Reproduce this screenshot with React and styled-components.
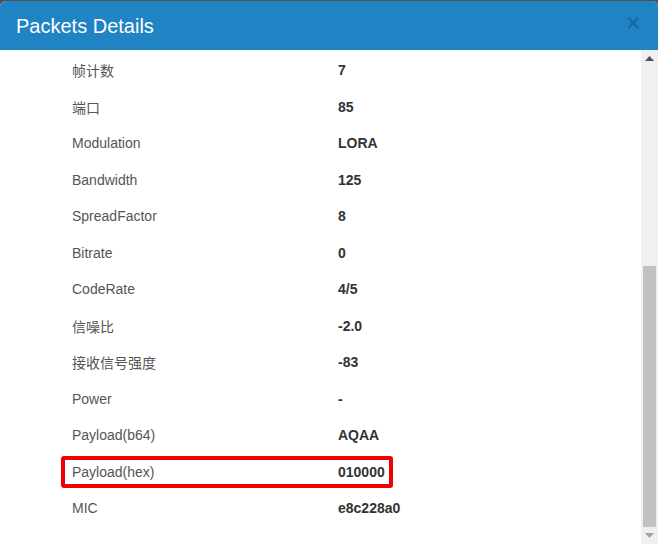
import React from "react";
import styled, { createGlobalStyle } from "styled-components";

const Global = createGlobalStyle`
  html, body { margin: 0; padding: 0; }
  body {
    background: #505050;
    font-family: "Liberation Sans", Arial, "Noto Sans CJK SC", sans-serif;
    overflow: hidden;
  }
`;

const Page = styled.div`
  height: 100vh;
  padding-top: 1px;
  box-sizing: border-box;
  display: flex;
  flex-direction: column;
`;

const Modal = styled.div`
  flex: 1;
  display: flex;
  flex-direction: column;
  background: #fff;
  border-radius: 6px 6px 0 0;
  overflow: hidden;
  min-height: 0;
`;

const Header = styled.div`
  height: 49px;
  flex: none;
  background: #2083c3;
  display: flex;
  align-items: center;
  justify-content: space-between;
  padding: 0 16px;
`;

const Title = styled.h4`
  margin: 0;
  color: #fff;
  font-size: 20px;
  font-weight: 400;
  line-height: 1;
  padding-top: 1px;
`;

const Close = styled.span`
  color: #000;
  opacity: 0.18;
  font-size: 23px;
  font-weight: 700;
  line-height: 1;
  margin-top: -4px;
  margin-right: 2px;
`;

const Body = styled.div`
  flex: 1;
  display: flex;
  min-height: 0;
`;

const Content = styled.div`
  flex: 1;
  padding-top: 2px;
  display: flex;
  flex-direction: column;
`;

const Row = styled.div`
  position: relative;
  display: grid;
  grid-template-columns: 266px auto;
  align-items: center;
  width: fit-content;
  height: 36.5px;
  margin-left: 62px;
  padding: 0 8px 0 10px;
  font-size: 14px;

  ${(p) =>
    p.$highlight &&
    `
    &::after {
      content: "";
      position: absolute;
      left: -1px;
      right: 0;
      top: 2px;
      bottom: 2.5px;
      border: 4px solid #f00000;
      border-radius: 3px;
    }
  `}
`;

const Label = styled.span`
  color: #555;
  font-family: "Liberation Sans", Arial, "Noto Sans CJK SC", sans-serif;
`;

const Value = styled.span`
  color: #333;
  font-weight: 700;
`;

const Scrollbar = styled.div`
  width: 17px;
  flex: none;
  background: #f0f0f0;
  display: flex;
  flex-direction: column;
`;

const ArrowBtn = styled.div`
  height: 17px;
  flex: none;
  display: flex;
  align-items: center;
  justify-content: center;
`;

const Track = styled.div`
  flex: 1;
  display: flex;
  flex-direction: column;
  justify-content: flex-end;
  padding: 0 2px;
`;

const Thumb = styled.div`
  height: 261px;
  background: #c1c1c1;
`;

const Tri = ({ up, color }) => (
  <svg width="9" height="5" viewBox="0 0 9 5">
    <polygon
      points={up ? "0,5 9,5 4.5,0" : "0,0 9,0 4.5,5"}
      fill={color}
    />
  </svg>
);

const rows = [
  ["帧计数", "7"],
  ["端口", "85"],
  ["Modulation", "LORA"],
  ["Bandwidth", "125"],
  ["SpreadFactor", "8"],
  ["Bitrate", "0"],
  ["CodeRate", "4/5"],
  ["信噪比", "-2.0"],
  ["接收信号强度", "-83"],
  ["Power", "-"],
  ["Payload(b64)", "AQAA"],
  ["Payload(hex)", "010000", true],
  ["MIC", "e8c228a0"],
];

export default function App() {
  return (
    <>
      <Global />
      <Page>
        <Modal>
          <Header>
            <Title>Packets Details</Title>
            <Close>×</Close>
          </Header>
          <Body>
            <Content>
              {rows.map(([l, v, h]) => (
                <Row key={l} $highlight={h}>
                  <Label>{l}</Label>
                  <Value>{v}</Value>
                </Row>
              ))}
            </Content>
            <Scrollbar>
              <ArrowBtn>
                <Tri up color="#505050" />
              </ArrowBtn>
              <Track>
                <Thumb />
              </Track>
              <ArrowBtn>
                <Tri color="#a3a3a3" />
              </ArrowBtn>
            </Scrollbar>
          </Body>
        </Modal>
      </Page>
    </>
  );
}
